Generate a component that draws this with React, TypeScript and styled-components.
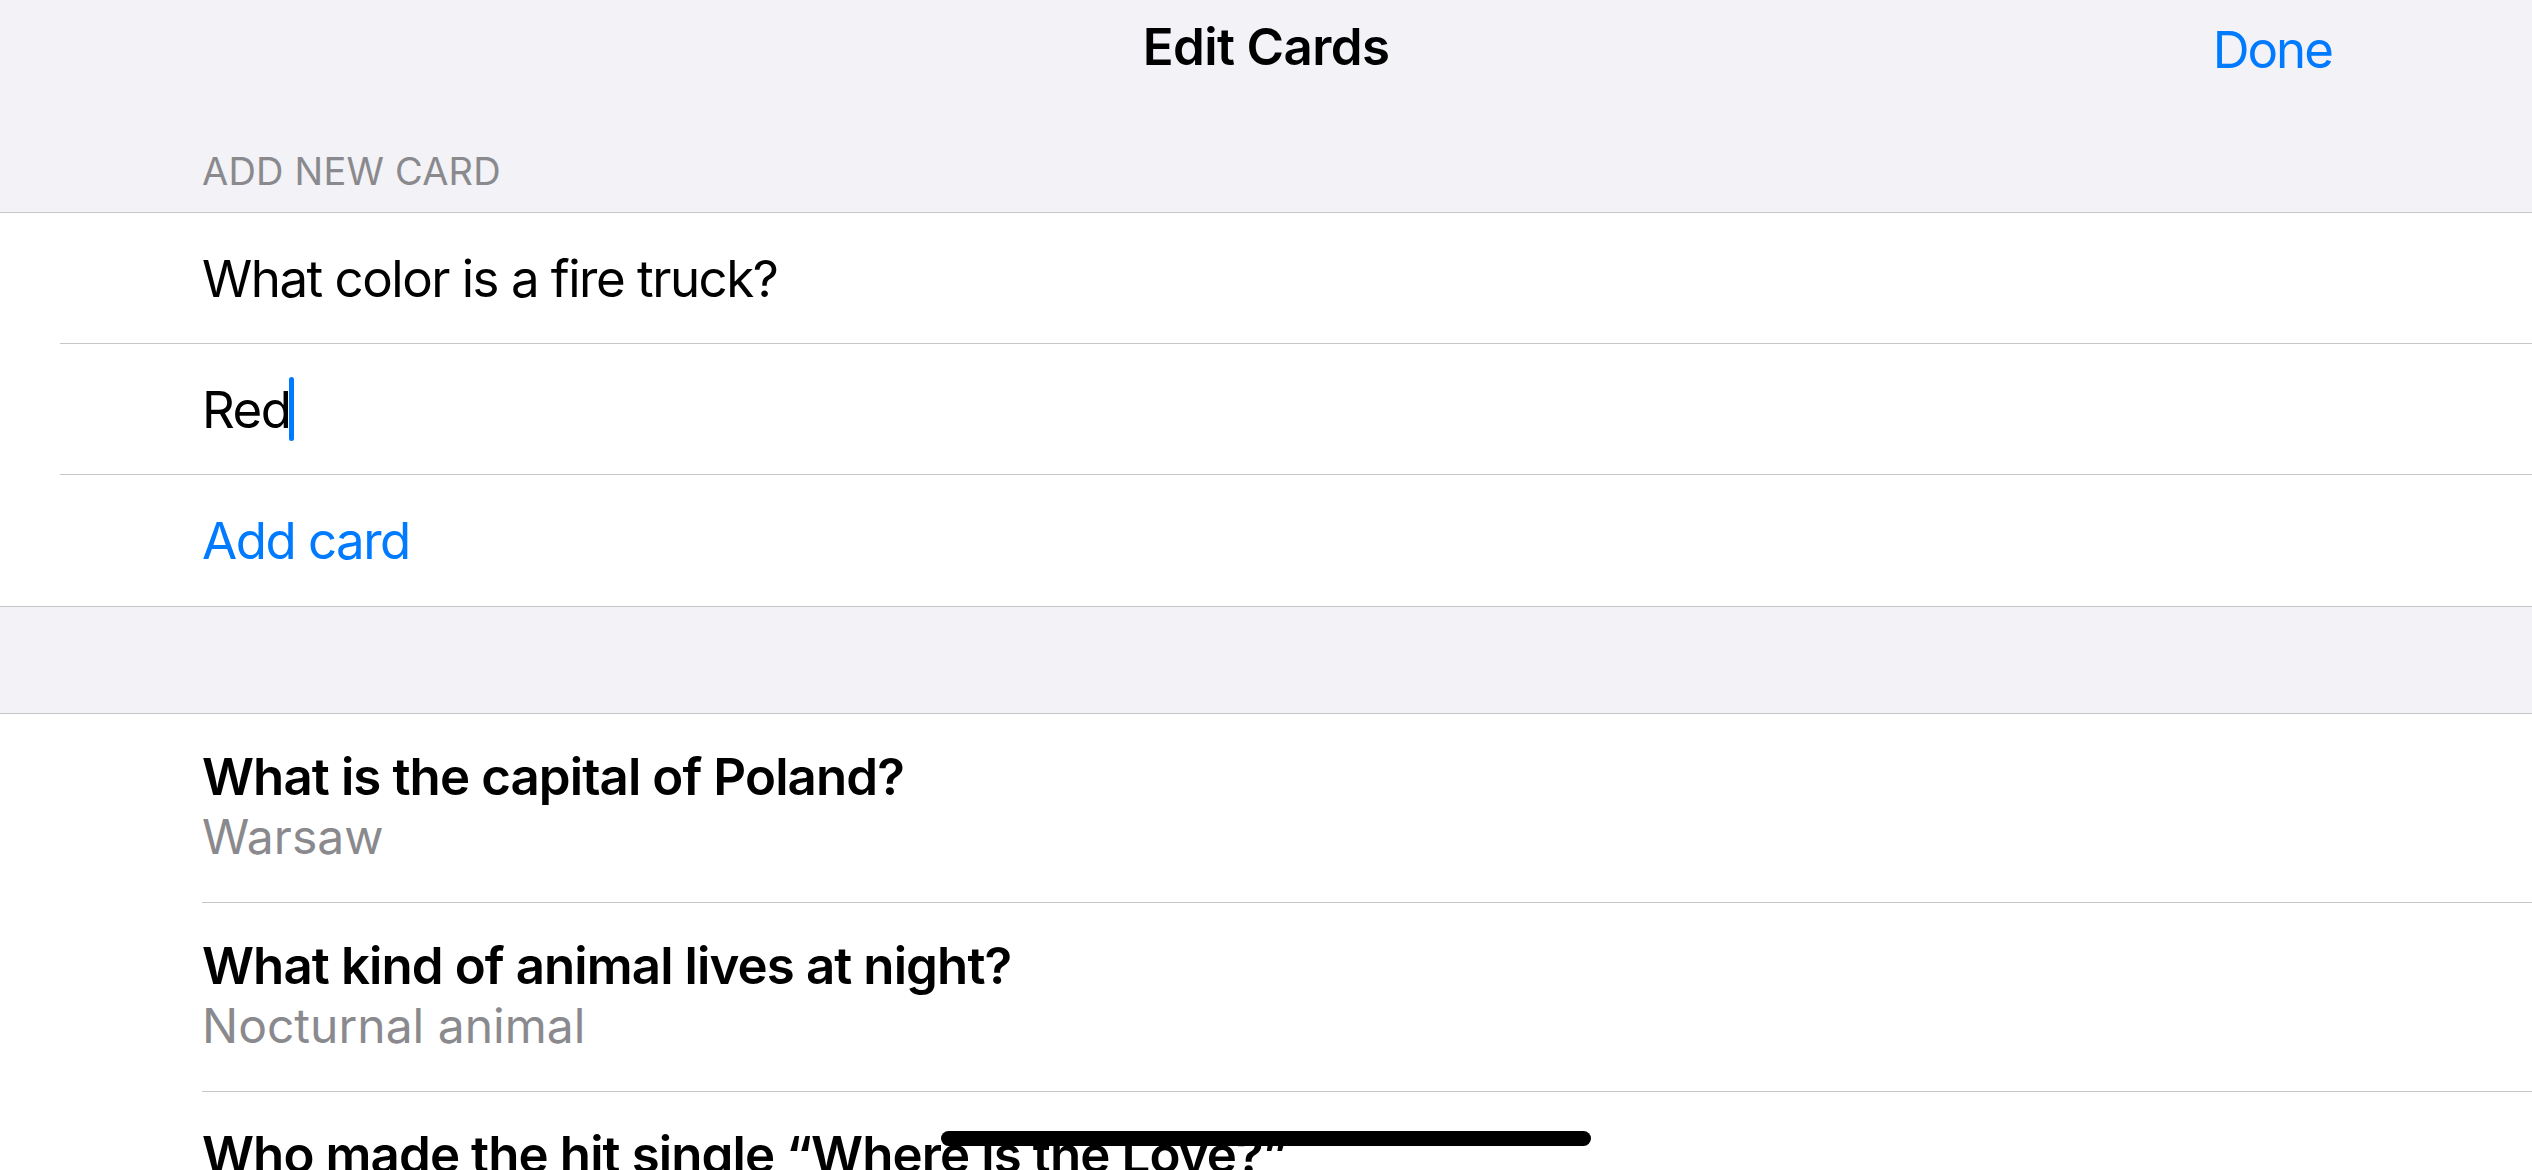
import React from "react";
import styled, { createGlobalStyle } from "styled-components";

const GlobalStyle = createGlobalStyle`
    html, body {
        margin: 0;
        padding: 0;
        background: #f2f2f7;
    }
    * {
        box-sizing: border-box;
    }
`;

const blue = "#007aff";
const gray = "#8a8a8e";
const line = "#c6c6c8";

const Screen = styled.div`
    position: relative;
    width: 2532px;
    height: 1170px;
    overflow: hidden;
    background: #f2f2f7;
    font-family: Inter, "Noto Sans", sans-serif;
    color: #000;
    -webkit-font-smoothing: antialiased;
`;

const NavBar = styled.div`
    display: grid;
    grid-template-columns: 1fr auto 1fr;
    align-items: center;
    height: 92px;
    padding: 0 200px;
`;

const NavTitle = styled.div`
    grid-column: 2;
    font-size: 51px;
    font-weight: 600;
    line-height: 1;
    letter-spacing: -0.6px;
`;

const NavButton = styled.button`
    justify-self: end;
    border: none;
    background: none;
    padding: 6px 0 0;
    color: ${blue};
    font-family: inherit;
    font-size: 51px;
    line-height: 1;
    letter-spacing: -2px;
`;

const SectionHeader = styled.div`
    height: 120px;
    padding: 0 202px 22px;
    display: flex;
    align-items: flex-end;
    color: ${gray};
    font-size: 38px;
    line-height: 1;
    letter-spacing: 0.2px;
    text-transform: uppercase;
`;

const Group = styled.div`
    background: #fff;
    border-top: 1.5px solid ${line};
    border-bottom: 1.5px solid ${line};
`;

const FieldRow = styled.div<{ $last?: boolean }>`
    display: flex;
    align-items: center;
    height: 131px;
    margin-left: 60px;
    padding-left: 142px;
    border-bottom: ${p => (p.$last ? "none" : `1.5px solid ${line}`)};
    font-size: 51px;
    letter-spacing: -1.5px;
    color: ${p => (p.color ? p.color : "#000")};
`;

const Caret = styled.span`
    display: inline-block;
    width: 5px;
    height: 64px;
    margin-left: -2px;
    border-radius: 3px;
    background: ${blue};
    vertical-align: middle;
`;

const Gap = styled.div`
    height: 106px;
`;

const CardList = styled.div`
    background: #fff;
    border-top: 1.5px solid ${line};
`;

const CardRow = styled.div`
    margin-left: 202px;
    padding: 33px 0 35px;
    border-bottom: 1.5px solid ${line};
`;

const CardQuestion = styled.div`
    font-size: 51px;
    font-weight: 600;
    line-height: 60px;
    letter-spacing: -0.9px;
    white-space: nowrap;
`;

const CardAnswer = styled.div`
    font-size: 48px;
    line-height: 60px;
    letter-spacing: 0;
    color: ${gray};
`;

const HomeIndicator = styled.div`
    position: absolute;
    left: 50%;
    bottom: 24px;
    width: 650px;
    height: 15px;
    margin-left: -325px;
    border-radius: 8px;
    background: #000;
`;

const cards = [
    { q: "What is the capital of Poland?", a: "Warsaw" },
    { q: "What kind of animal lives at night?", a: "Nocturnal animal" },
    { q: "Who made the hit single \u201cWhere is the Love?\u201d", a: "The Black Eyed Peas" },
];

export default function App() {
    return (
        <Screen>
            <GlobalStyle />
            <NavBar>
                <NavTitle>Edit Cards</NavTitle>
                <NavButton>Done</NavButton>
            </NavBar>
            <SectionHeader>Add New Card</SectionHeader>
            <Group>
                <FieldRow>What color is a fire truck?</FieldRow>
                <FieldRow>
                    Red<Caret />
                </FieldRow>
                <FieldRow $last color={blue}>Add card</FieldRow>
            </Group>
            <Gap />
            <CardList>
                {cards.map(card => (
                    <CardRow key={card.q}>
                        <CardQuestion>{card.q}</CardQuestion>
                        <CardAnswer>{card.a}</CardAnswer>
                    </CardRow>
                ))}
            </CardList>
            <HomeIndicator />
        </Screen>
    );
}
